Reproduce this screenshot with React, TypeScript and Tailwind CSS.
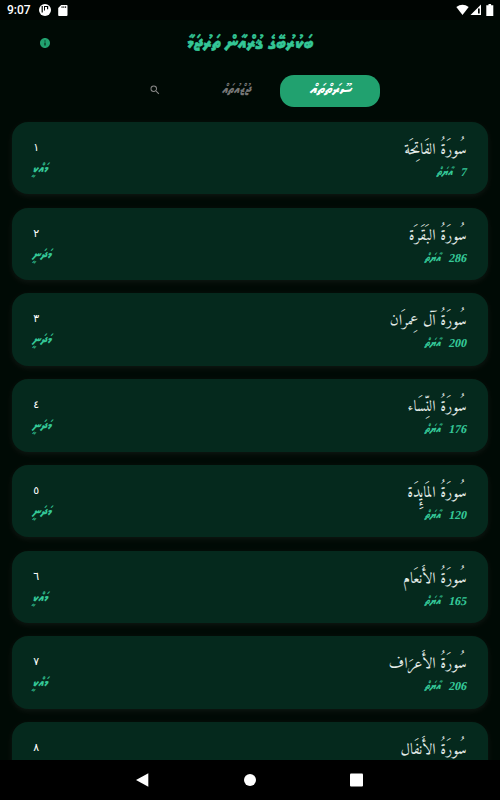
type Surah = { number: string; name: string; ayahs: number; place: string };

const MAKKI = "މައްކީ";
const MADANI = "މަދަނީ";

const surahs: Surah[] = [
  { number: "١", name: "سُورَةُ الفَاتِحَة", ayahs: 7, place: MAKKI },
  { number: "٢", name: "سُورَةُ البَقَرَة", ayahs: 286, place: MADANI },
  { number: "٣", name: "سُورَةُ آل عِمرَان", ayahs: 200, place: MADANI },
  { number: "٤", name: "سُورَةُ النِّسَاء", ayahs: 176, place: MADANI },
  { number: "٥", name: "سُورَةُ المَايِٕدَة", ayahs: 120, place: MADANI },
  { number: "٦", name: "سُورَةُ الأَنعَام", ayahs: 165, place: MAKKI },
  { number: "٧", name: "سُورَةُ الأَعرَاف", ayahs: 206, place: MAKKI },
  { number: "٨", name: "سُورَةُ الأَنفَال", ayahs: 75, place: MADANI },
];

function StatusBar() {
  return (
    <div className="flex h-5 shrink-0 items-center justify-between bg-[#000502] pl-[7px] pr-[6px]">
      <div className="flex items-center">
        <span className="w-[31px] font-['Roboto',sans-serif] text-[12px] leading-5 font-medium">9:07</span>
        <svg className="ml-px" width="12" height="12" viewBox="0 0 12 12">
          <circle cx="6" cy="6" r="6" fill="#fff" />
          <path d="M2.600 2h1.200v6.500H2.600zM5 2h1v4.500H5zM6 2h3.200v3.200H8V3H6z" fill="#000502" />
        </svg>
        <svg className="ml-[7px]" width="10" height="11" viewBox="0 0 10 11">
          <path d="M3.2 0H8.7Q9.5 0 9.5.8V10Q9.5 11 8.6 11H1Q.2 11 .2 10V3z" fill="#fff" />
          <path d="M3.600 1.200h.9v1.800h-.9zM5.400 1.200h.9v1.800h-.9zM7.200 1.200h.9v1.800h-.9z" fill="#000502" />
        </svg>
      </div>
      <svg width="38" height="12" viewBox="0 0 38 12">
        <path d="M.3 3Q6.5-1.5 12.700 3L6.500 11z" fill="#fff" />
        <path d="M25 .5V11H14.500z" fill="#fff" />
        <path d="M22 4.500h1.700V9.500H22z" fill="#000502" />
        <path d="M32.500 0h2.600v1.200h2.200V12h-7V1.200h2.200z" fill="#fff" />
      </svg>
    </div>
  );
}

function Header() {
  return (
    <header className="flex h-[46px] shrink-0 items-center px-[39px]">
      <svg width="12" height="12" viewBox="0 0 24 24" fill="#21a16f">
        <path d="M12 2C6.48 2 2 6.48 2 12s4.480 10 10 10 10-4.480 10-10S17.520 2 12 2zm1 15h-2v-6h2v6zm0-8h-2V7h2v2z" />
      </svg>
      <h1
        dir="rtl"
        className="flex-1 scale-y-110 pr-[12px] text-center font-['Noto_Sans_Thaana',sans-serif] text-[18px] leading-6 font-bold whitespace-nowrap text-[#34c797] [-webkit-text-stroke:0.5px_#34c797]"
      >
        ބަކުރުބޭގެ ޤުރްއާން ތަރުޖަމާ
      </h1>
    </header>
  );
}

function Tabs() {
  return (
    <nav className="flex h-[50px] shrink-0 items-center pl-[149px] font-['Noto_Sans_Thaana',sans-serif] font-bold">
      <svg className="-mt-0.5" width="12" height="12" viewBox="0 0 24 24" fill="#888">
        <path d="M15.500 14h-.79l-.28-.27A6.470 6.470 0 0 0 16 9.500 6.500 6.500 0 1 0 9.500 16c1.610 0 3.090-.59 4.230-1.570l.27.28v.79l5 4.990L20.490 19zm-6 0C7.010 14 5 11.990 5 9.500S7.010 5 9.500 5 14 7.010 14 9.500 11.990 14 9.500 14z" />
      </svg>
      <span className="mr-[14px] ml-[45px] w-[60px] scale-y-125 pb-1 text-center text-[12px] text-[#777] italic">ޖުޒްއުތައް</span>
      <span className="flex h-8 w-[100px] items-center justify-center rounded-[14px] bg-[#21a16f] pb-1 text-[15px] leading-6 italic">
        ސޫރަތްތައް
      </span>
    </nav>
  );
}

function SurahCard({ surah }: { surah: Surah }) {
  return (
    <li className="flex h-[72.4px] shrink-0 justify-between rounded-[16px] bg-[#05291d] pr-[21px] pl-[20px] shadow-[0_2px_6px_rgba(255,255,255,0.06)]">
      <div className="flex flex-col pt-[15px]">
        <span className="pl-px font-['DejaVu_Sans',sans-serif] text-[11px] leading-[21px]">{surah.number}</span>
        <span
          dir="rtl"
          className="scale-y-125 pt-px font-['Noto_Sans_Thaana',sans-serif] text-[11.500px] leading-5 font-bold text-[#34c797] italic"
        >
          {surah.place}
        </span>
      </div>
      <div dir="rtl" className="flex flex-col pt-[15px]">
        <span className="font-['Amiri',serif] text-[15.600px] leading-[26px] text-[#e6eeea]">{surah.name}</span>
        <span className="flex gap-[8px] font-['Liberation_Serif','Noto_Sans_Thaana',serif] text-[12px] leading-[18px] font-bold text-[#34c797]">
          <span className="-skew-x-12">{surah.ayahs}</span>
          <span className="scale-y-130 text-[10px] italic">އާޔަތް</span>
        </span>
      </div>
    </li>
  );
}

function NavigationBar() {
  return (
    <div className="flex h-10 shrink-0 items-center justify-center bg-black">
      <svg width="228" height="14" viewBox="0 0 228 14" fill="#fff">
        <path d="M0 7 12.300.2V13.800z" />
        <circle cx="114" cy="7" r="6" />
        <rect x="214" y=".5" width="13" height="13" rx="1" />
      </svg>
    </div>
  );
}

export default function App() {
  return (
    <div className="flex h-[800px] w-[500px] flex-col overflow-hidden bg-[#000a05] text-white">
      <StatusBar />
      <Header />
      <Tabs />
      <ul className="flex min-h-0 flex-1 flex-col gap-[13.400px] overflow-hidden pt-[5.800px] pr-[12.500px] pl-[12.300px]">
        {surahs.map((surah) => (
          <SurahCard key={surah.number} surah={surah} />
        ))}
      </ul>
      <NavigationBar />
    </div>
  );
}
